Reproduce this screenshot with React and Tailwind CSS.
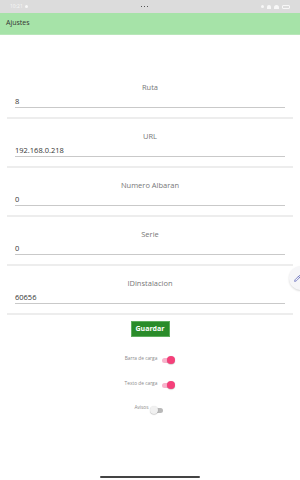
import { Pencil } from 'lucide-react';

const fields = [
  { label: 'Ruta', value: '8' },
  { label: 'URL', value: '192.168.0.218' },
  { label: 'Numero Albaran', value: '0' },
  { label: 'Serie', value: '0' },
  { label: 'IDinstalacion', value: '60656' },
];

function Toggle({ on }) {
  return (
    <div className="relative w-[12px] h-[8px] flex items-center">
      <div className={`w-full h-[5px] rounded-full ${on ? 'bg-[#f8b4cc]' : 'bg-[#b9b9b9]'}`} />
      <div
        className={`absolute top-0 w-[8px] h-[8px] rounded-full shadow-[0_0.5px_1px_rgba(0,0,0,0.3)] ${on ? 'right-[-1px] bg-[#f5407a]' : 'left-[-1px] bg-[#f1f1f1]'}`}
      />
    </div>
  );
}

export default function App() {
  return (
    <div className="relative w-[300px] h-[480px] bg-white overflow-hidden font-['Open_Sans',sans-serif]">
      {/* status bar */}
      <div className="h-[13px] bg-[#dcdcdc] flex items-center justify-between px-[10px] text-[5px] text-[#f7f7f7]">
        <div className="flex items-center gap-[2px]">
          <span>10:21</span>
          <span className="w-[3px] h-[3px] rounded-full bg-[#f7f7f7]" />
        </div>
        <div className="flex gap-[1.5px]">
          <span className="w-[1.5px] h-[1.5px] bg-[#555]" />
          <span className="w-[1.5px] h-[1.5px] bg-[#555]" />
          <span className="w-[1.5px] h-[1.5px] bg-[#555]" />
        </div>
        <div className="flex items-center gap-[3px]">
          <span className="w-[3px] h-[3px] rounded-full bg-[#f7f7f7]" />
          <span className="w-[4px] h-[4px] rounded-t-full bg-[#f7f7f7]" />
          <span className="w-[5px] h-[4px] rounded-t-full bg-[#f7f7f7]" />
          <span className="w-[8px] h-[4px] rounded-[1px] border border-[#f7f7f7]" />
        </div>
      </div>

      {/* header */}
      <div className="h-[22px] bg-[#a6e3a8] flex items-center px-[6px] text-[7px] text-[#333] border-b border-[#b8e6b9]">
        Ajustes
      </div>

      {/* form */}
      <div className="px-[7px] pt-[35px]">
        {fields.map((f) => (
          <div key={f.label} className="border-b-2 border-[#ededed] pt-[12px] pb-[9px]">
            <div className="text-center text-[7.5px] leading-[10px] text-[#777]">{f.label}</div>
            <div className="mx-[8px] mt-[4px] border-b border-[#c9c9c9] text-[7.5px] leading-[10px] text-[#333] pb-[1px]">
              {f.value}
            </div>
          </div>
        ))}
      </div>

      <div className="flex justify-center mt-[6px]">
        <button className="w-[39px] h-[16px] bg-[#2a8c2a] border border-[#5fae5f] text-white text-[7px] font-bold flex items-center justify-center">
          Guardar
        </button>
      </div>

      <div className="flex flex-col items-center mt-[18px] text-[4.8px] text-[#8a8a8a]">
        <div className="flex items-start gap-[5px] ml-[-1px]">
          <span className="leading-[6px]">Barra de carga</span>
          <div className="mt-[1px]"><Toggle on /></div>
        </div>
        <div className="flex items-start gap-[5px] mt-[16px] ml-[-1px]">
          <span className="leading-[6px]">Texto de carga</span>
          <div className="mt-[1px]"><Toggle on /></div>
        </div>
        <div className="flex items-start gap-[2px] mt-[15px] ml-[-3px]">
          <span className="leading-[6px]">Avisos</span>
          <div className="mt-[2px]"><Toggle /></div>
        </div>
      </div>

      {/* edit fab */}
      <div className="absolute left-[289px] top-[266px] w-[24px] h-[24px] rounded-full bg-[#f6f6f8] shadow-[0_1px_2px_rgba(0,0,0,0.15)] flex items-center pl-[5px]">
        <Pencil size={7} color="#5b63b7" strokeWidth={2.5} />
      </div>

      {/* home indicator */}
      <div className="absolute left-[100px] top-[476px] w-[100px] h-[2px] rounded-full bg-[#444]" />
    </div>
  );
}
